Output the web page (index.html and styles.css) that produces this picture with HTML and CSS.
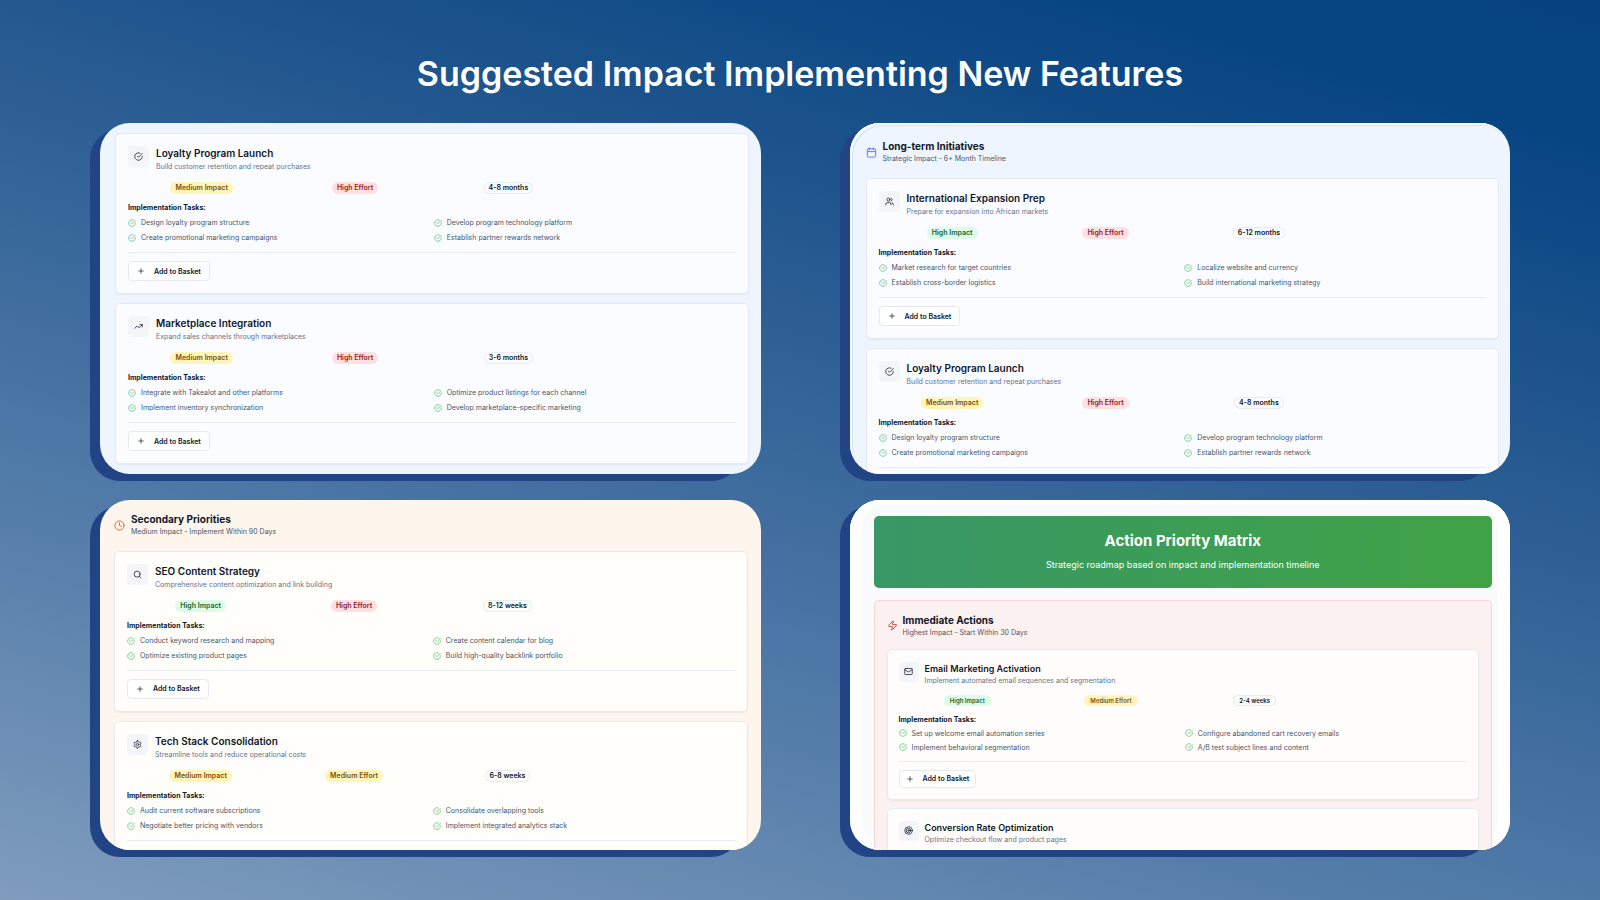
FILE: index.html
```html
<!DOCTYPE html>
<html lang="en">

<head>
    <meta charset="UTF-8">
    <meta name="viewport" content="width=device-width, initial-scale=1.0">
    <title>Suggested Impact Implementing New Features</title>
    <link rel="stylesheet" href="styles.css">
</head>

<body>
    <svg class="sprite" aria-hidden="true">
        <symbol id="check" viewBox="0 0 24 24"><path d="M22 11.08V12a10 10 0 1 1-5.93-9.14"/><path d="m9 11 3 3L22 4"/></symbol>
        <symbol id="trending" viewBox="0 0 24 24"><path d="m22 7-8.5 8.5-5-5L2 17"/><path d="M16 7h6v6"/></symbol>
        <symbol id="users" viewBox="0 0 24 24"><path d="M16 21v-2a4 4 0 0 0-4-4H6a4 4 0 0 0-4 4v2"/><circle cx="9" cy="7" r="4"/><path d="M22 21v-2a4 4 0 0 0-3-3.87"/><path d="M16 3.13a4 4 0 0 1 0 7.75"/></symbol>
        <symbol id="calendar" viewBox="0 0 24 24"><path d="M8 2v4M16 2v4M3 10h18"/><rect x="3" y="4" width="18" height="18" rx="2"/></symbol>
        <symbol id="clock" viewBox="0 0 24 24"><circle cx="12" cy="12" r="10"/><path d="M12 6v6l4 2"/></symbol>
        <symbol id="search" viewBox="0 0 24 24"><circle cx="11" cy="11" r="8"/><path d="m21 21-4.3-4.3"/></symbol>
        <symbol id="settings" viewBox="0 0 24 24"><path d="M12.22 2h-.44a2 2 0 0 0-2 2v.18a2 2 0 0 1-1 1.73l-.43.25a2 2 0 0 1-2 0l-.15-.08a2 2 0 0 0-2.73.73l-.22.38a2 2 0 0 0 .73 2.73l.15.1a2 2 0 0 1 1 1.72v.51a2 2 0 0 1-1 1.74l-.15.09a2 2 0 0 0-.73 2.73l.22.38a2 2 0 0 0 2.73.73l.15-.08a2 2 0 0 1 2 0l.43.25a2 2 0 0 1 1 1.73V20a2 2 0 0 0 2 2h.44a2 2 0 0 0 2-2v-.18a2 2 0 0 1 1-1.73l.43-.25a2 2 0 0 1 2 0l.15.08a2 2 0 0 0 2.73-.73l.22-.39a2 2 0 0 0-.73-2.73l-.15-.08a2 2 0 0 1-1-1.74v-.5a2 2 0 0 1 1-1.74l.15-.09a2 2 0 0 0 .73-2.73l-.22-.38a2 2 0 0 0-2.73-.73l-.15.08a2 2 0 0 1-2 0l-.43-.25a2 2 0 0 1-1-1.73V4a2 2 0 0 0-2-2z"/><circle cx="12" cy="12" r="3"/></symbol>
        <symbol id="zap" viewBox="0 0 24 24"><path d="M4 14a1 1 0 0 1-.78-1.63l9.9-10.2a.5.5 0 0 1 .86.46l-1.92 6.02A1 1 0 0 0 13 10h7a1 1 0 0 1 .78 1.63l-9.9 10.2a.5.5 0 0 1-.86-.46l1.92-6.02A1 1 0 0 0 11 14z"/></symbol>
        <symbol id="mail" viewBox="0 0 24 24"><rect x="2" y="4" width="20" height="16" rx="2"/><path d="m22 7-8.97 5.7a1.94 1.94 0 0 1-2.06 0L2 7"/></symbol>
        <symbol id="target" viewBox="0 0 24 24"><circle cx="12" cy="12" r="10"/><circle cx="12" cy="12" r="6"/><circle cx="12" cy="12" r="2"/></symbol>
        <symbol id="plus" viewBox="0 0 24 24"><path d="M5 12h14M12 5v14"/></symbol>
    </svg>

    <h1>Suggested Impact Implementing New Features</h1>

    <main class="panels">
        <div class="panel">
            <section class="panel-body blue">
                <article class="card">
                    <div class="card-head">
                        <span class="card-icon"><svg><use href="#check"/></svg></span>
                        <div>
                            <h3>Loyalty Program Launch</h3>
                            <p>Build customer retention and repeat purchases</p>
                        </div>
                    </div>
                    <div class="badges">
                        <span class="badge medium">Medium Impact</span>
                        <span class="badge high">High Effort</span>
                        <span class="badge time">4-8 months</span>
                    </div>
                    <h4>Implementation Tasks:</h4>
                    <ul class="tasks">
                        <li><svg><use href="#check"/></svg>Design loyalty program structure</li>
                        <li><svg><use href="#check"/></svg>Develop program technology platform</li>
                        <li><svg><use href="#check"/></svg>Create promotional marketing campaigns</li>
                        <li><svg><use href="#check"/></svg>Establish partner rewards network</li>
                    </ul>
                    <div class="card-footer">
                        <button type="button"><svg><use href="#plus"/></svg>Add to Basket</button>
                    </div>
                </article>

                <article class="card">
                    <div class="card-head">
                        <span class="card-icon"><svg><use href="#trending"/></svg></span>
                        <div>
                            <h3>Marketplace Integration</h3>
                            <p>Expand sales channels through marketplaces</p>
                        </div>
                    </div>
                    <div class="badges">
                        <span class="badge medium">Medium Impact</span>
                        <span class="badge high">High Effort</span>
                        <span class="badge time">3-6 months</span>
                    </div>
                    <h4>Implementation Tasks:</h4>
                    <ul class="tasks">
                        <li><svg><use href="#check"/></svg>Integrate with Takealot and other platforms</li>
                        <li><svg><use href="#check"/></svg>Optimize product listings for each channel</li>
                        <li><svg><use href="#check"/></svg>Implement inventory synchronization</li>
                        <li><svg><use href="#check"/></svg>Develop marketplace-specific marketing</li>
                    </ul>
                    <div class="card-footer">
                        <button type="button"><svg><use href="#plus"/></svg>Add to Basket</button>
                    </div>
                </article>
            </section>
        </div>

        <div class="panel">
            <section class="panel-body blue outlined">
                <header class="section-head">
                    <svg><use href="#calendar"/></svg>
                    <div>
                        <h2>Long-term Initiatives</h2>
                        <p>Strategic Impact - 6+ Month Timeline</p>
                    </div>
                </header>

                <article class="card">
                    <div class="card-head">
                        <span class="card-icon"><svg><use href="#users"/></svg></span>
                        <div>
                            <h3>International Expansion Prep</h3>
                            <p>Prepare for expansion into African markets</p>
                        </div>
                    </div>
                    <div class="badges">
                        <span class="badge good">High Impact</span>
                        <span class="badge high">High Effort</span>
                        <span class="badge time">6-12 months</span>
                    </div>
                    <h4>Implementation Tasks:</h4>
                    <ul class="tasks">
                        <li><svg><use href="#check"/></svg>Market research for target countries</li>
                        <li><svg><use href="#check"/></svg>Localize website and currency</li>
                        <li><svg><use href="#check"/></svg>Establish cross-border logistics</li>
                        <li><svg><use href="#check"/></svg>Build international marketing strategy</li>
                    </ul>
                    <div class="card-footer">
                        <button type="button"><svg><use href="#plus"/></svg>Add to Basket</button>
                    </div>
                </article>

                <article class="card">
                    <div class="card-head">
                        <span class="card-icon"><svg><use href="#check"/></svg></span>
                        <div>
                            <h3>Loyalty Program Launch</h3>
                            <p>Build customer retention and repeat purchases</p>
                        </div>
                    </div>
                    <div class="badges">
                        <span class="badge medium">Medium Impact</span>
                        <span class="badge high">High Effort</span>
                        <span class="badge time">4-8 months</span>
                    </div>
                    <h4>Implementation Tasks:</h4>
                    <ul class="tasks">
                        <li><svg><use href="#check"/></svg>Design loyalty program structure</li>
                        <li><svg><use href="#check"/></svg>Develop program technology platform</li>
                        <li><svg><use href="#check"/></svg>Create promotional marketing campaigns</li>
                        <li><svg><use href="#check"/></svg>Establish partner rewards network</li>
                    </ul>
                    <div class="card-footer"></div>
                </article>
            </section>
        </div>

        <div class="panel">
            <section class="panel-body orange">
                <header class="section-head">
                    <svg><use href="#clock"/></svg>
                    <div>
                        <h2>Secondary Priorities</h2>
                        <p>Medium Impact - Implement Within 90 Days</p>
                    </div>
                </header>

                <article class="card">
                    <div class="card-head">
                        <span class="card-icon"><svg><use href="#search"/></svg></span>
                        <div>
                            <h3>SEO Content Strategy</h3>
                            <p>Comprehensive content optimization and link building</p>
                        </div>
                    </div>
                    <div class="badges">
                        <span class="badge good">High Impact</span>
                        <span class="badge high">High Effort</span>
                        <span class="badge time">8-12 weeks</span>
                    </div>
                    <h4>Implementation Tasks:</h4>
                    <ul class="tasks">
                        <li><svg><use href="#check"/></svg>Conduct keyword research and mapping</li>
                        <li><svg><use href="#check"/></svg>Create content calendar for blog</li>
                        <li><svg><use href="#check"/></svg>Optimize existing product pages</li>
                        <li><svg><use href="#check"/></svg>Build high-quality backlink portfolio</li>
                    </ul>
                    <div class="card-footer">
                        <button type="button"><svg><use href="#plus"/></svg>Add to Basket</button>
                    </div>
                </article>

                <article class="card">
                    <div class="card-head">
                        <span class="card-icon"><svg><use href="#settings"/></svg></span>
                        <div>
                            <h3>Tech Stack Consolidation</h3>
                            <p>Streamline tools and reduce operational costs</p>
                        </div>
                    </div>
                    <div class="badges">
                        <span class="badge medium">Medium Impact</span>
                        <span class="badge medium">Medium Effort</span>
                        <span class="badge time">6-8 weeks</span>
                    </div>
                    <h4>Implementation Tasks:</h4>
                    <ul class="tasks">
                        <li><svg><use href="#check"/></svg>Audit current software subscriptions</li>
                        <li><svg><use href="#check"/></svg>Consolidate overlapping tools</li>
                        <li><svg><use href="#check"/></svg>Negotiate better pricing with vendors</li>
                        <li><svg><use href="#check"/></svg>Implement integrated analytics stack</li>
                    </ul>
                    <div class="card-footer"></div>
                </article>
            </section>
        </div>

        <div class="panel">
            <div class="panel-body matrix">
                <div class="banner">
                    <h2>Action Priority Matrix</h2>
                    <p>Strategic roadmap based on impact and implementation timeline</p>
                </div>

                <section class="red">
                    <header class="section-head">
                        <svg><use href="#zap"/></svg>
                        <div>
                            <h2>Immediate Actions</h2>
                            <p>Highest Impact - Start Within 30 Days</p>
                        </div>
                    </header>

                    <article class="card">
                        <div class="card-head">
                            <span class="card-icon"><svg><use href="#mail"/></svg></span>
                            <div>
                                <h3>Email Marketing Activation</h3>
                                <p>Implement automated email sequences and segmentation</p>
                            </div>
                        </div>
                        <div class="badges">
                            <span class="badge good">High Impact</span>
                            <span class="badge medium">Medium Effort</span>
                            <span class="badge time">2-4 weeks</span>
                        </div>
                        <h4>Implementation Tasks:</h4>
                        <ul class="tasks">
                            <li><svg><use href="#check"/></svg>Set up welcome email automation series</li>
                            <li><svg><use href="#check"/></svg>Configure abandoned cart recovery emails</li>
                            <li><svg><use href="#check"/></svg>Implement behavioral segmentation</li>
                            <li><svg><use href="#check"/></svg>A/B test subject lines and content</li>
                        </ul>
                        <div class="card-footer">
                            <button type="button"><svg><use href="#plus"/></svg>Add to Basket</button>
                        </div>
                    </article>

                    <article class="card">
                        <div class="card-head">
                            <span class="card-icon"><svg><use href="#target"/></svg></span>
                            <div>
                                <h3>Conversion Rate Optimization</h3>
                                <p>Optimize checkout flow and product pages</p>
                            </div>
                        </div>
                    </article>
                </section>
            </div>
        </div>
    </main>
</body>

</html>
```
FILE: styles.css
```css
* {
    box-sizing: border-box;
}

body {
    display: flex;
    flex-direction: column;
    height: 100vh;
    min-height: 700px;
    margin: 0;
    padding: 50px 0;
    background: linear-gradient(196deg, #05427f 0%, #064482 10%, #24588f 34%, #4f79a7 67%, #7f9cbd 100%);
    color: #0f172a;
    font-family: Inter, "Helvetica Neue", Arial, sans-serif;
}

h1, h2, h3, h4, p, ul {
    margin: 0;
    padding: 0;
}

svg {
    flex: none;
    fill: none;
    stroke: currentColor;
    stroke-width: 2;
    stroke-linecap: round;
    stroke-linejoin: round;
}

.sprite {
    position: absolute;
    width: 0;
    height: 0;
}

h1 {
    margin-bottom: 26px;
    color: white;
    font-size: 34px;
    font-weight: 600;
    line-height: 47px;
    text-align: center;
}

.panels {
    display: grid;
    flex: 1;
    grid-template-columns: 1fr 1fr;
    grid-template-rows: 1fr 1fr;
    gap: 26px 89px;
    min-height: 0;
    padding: 0 90px 0 100px;
}

.panel {
    position: relative;
    min-width: 0;
    min-height: 0;
}

/* solid slab behind each panel */
.panel::before {
    content: "";
    position: absolute;
    inset: 6px 20px -7px -10px;
    border-radius: 30px;
    background-color: #224384;
}

.panel-body {
    position: relative;
    display: flex;
    flex-direction: column;
    gap: 9px;
    height: 100%;
    padding: 10px 12px 9px 15px;
    border-radius: 30px;
    overflow: hidden;
}

.blue {
    background-color: #eef5ff;
}

.blue .section-head svg {
    color: #4f7fe0;
}

.outlined {
    padding: 17px 11px 0 16px;
    box-shadow: inset 2px 2px #f8fbff, inset 3px 3px #d5e4f5;
}

.orange {
    padding: 13px 13px 0 14px;
    background-color: #fef6ec;
}

.orange .section-head svg {
    color: #d0692f;
}

.section-head {
    display: flex;
    align-items: center;
    gap: 6px;
    margin-bottom: 4px;
}

.section-head svg {
    width: 11px;
    height: 11px;
}

.section-head h2 {
    font-size: 10px;
    font-weight: 700;
    line-height: 13px;
}

.section-head p {
    color: #475569;
    font-size: 7px;
    line-height: 12px;
}

.card {
    flex: none;
    padding: 12px;
    border: 1px solid #e4eaf1;
    border-radius: 5px;
    background-color: #fbfcff;
    box-shadow: 0 1px 1px rgb(15, 23, 42, 0.05);
}

.orange .card {
    background-color: #fffefb;
}

.card-head {
    display: flex;
    gap: 7px;
}

.card-icon {
    display: flex;
    align-items: center;
    justify-content: center;
    width: 21px;
    height: 21px;
    border-radius: 4px;
    background-color: #f3f5f9;
}

.card-icon svg {
    width: 9px;
    height: 9px;
}

.card h3 {
    font-size: 10px;
    font-weight: 600;
    line-height: 14px;
}

.card-head p {
    color: #64748b;
    font-size: 7px;
    line-height: 13px;
}

.badges {
    display: grid;
    grid-template-columns: repeat(4, 1fr);
    gap: 6px;
    justify-items: center;
    margin-top: 9px;
}

.badge {
    padding: 0 5px;
    border-radius: 6px;
    font-size: 7px;
    font-weight: 600;
    line-height: 12px;
}

.good {
    background-color: #dcfce7;
    color: #166534;
}

.medium {
    background-color: #fef6b8;
    color: #854d0e;
}

.high {
    background-color: #fee0e0;
    color: #991b1b;
}

.time {
    box-shadow: inset 0 0 0 1px #e8ecf2;
}

.card h4 {
    margin-top: 8px;
    font-size: 7px;
    font-weight: 700;
    line-height: 12px;
}

.tasks {
    display: grid;
    grid-template-columns: 1fr 1fr;
    gap: 3px 4px;
    margin-top: 3px;
    list-style: none;
}

.tasks li {
    display: flex;
    align-items: center;
    gap: 5px;
    color: #475569;
    font-size: 7px;
    line-height: 12px;
}

.tasks svg {
    width: 8px;
    height: 8px;
    color: #3fb95c;
}

.card-footer {
    margin-top: 8px;
    padding-top: 8px;
    border-top: 1px solid #e6ebf1;
}

.card button {
    display: flex;
    align-items: center;
    gap: 9px;
    height: 20px;
    padding: 0 8px;
    border: 1px solid #e6eaf0;
    border-radius: 4px;
    background-color: white;
    color: #0f172a;
    font-family: inherit;
    font-size: 7px;
    font-weight: 600;
    cursor: pointer;
}

.card button svg {
    width: 8px;
    height: 8px;
}

/* Action Priority Matrix */
.matrix {
    gap: 12px;
    padding: 16px 18px 0 24px;
    background-color: #f9fafc;
    box-shadow: inset 12px 0 white, inset -12px 0 white, inset 0 5px white;
}

.banner {
    flex: none;
    padding: 14px 0;
    border-radius: 5px;
    background: linear-gradient(90deg, #389867, #40a245);
    color: white;
    text-align: center;
}

.banner h2 {
    font-size: 15px;
    font-weight: 700;
    line-height: 22px;
}

.banner p {
    margin-top: 4px;
    font-size: 9px;
    line-height: 18px;
}

.red {
    display: flex;
    flex: 1;
    flex-direction: column;
    gap: 8px;
    min-height: 0;
    padding: 13px 12px 0;
    border: 1px solid #f6d5d5;
    border-bottom: 0;
    border-radius: 5px 5px 0 0;
    background-color: #fcf1f1;
}

.red .section-head {
    gap: 5px;
    margin-bottom: 3px;
}

.red .section-head svg {
    color: #d93636;
}

.red .section-head p {
    line-height: 11px;
}

.red .card {
    padding: 12px 11px 11px;
    background-color: #fffdfc;
}

.red .card:last-child {
    flex: 1 0 auto;
}

.red .card-head {
    gap: 6px;
}

.red .card-icon {
    width: 20px;
    height: 20px;
}

.red .card h3 {
    font-size: 9px;
    line-height: 13px;
}

.red .card-head p,
.red .card h4,
.red .tasks li {
    line-height: 11px;
}

.red .badge {
    padding: 0 6px;
    font-size: 6px;
    line-height: 11px;
}

.red .card button {
    height: 18px;
    padding: 0 6px;
}
```
